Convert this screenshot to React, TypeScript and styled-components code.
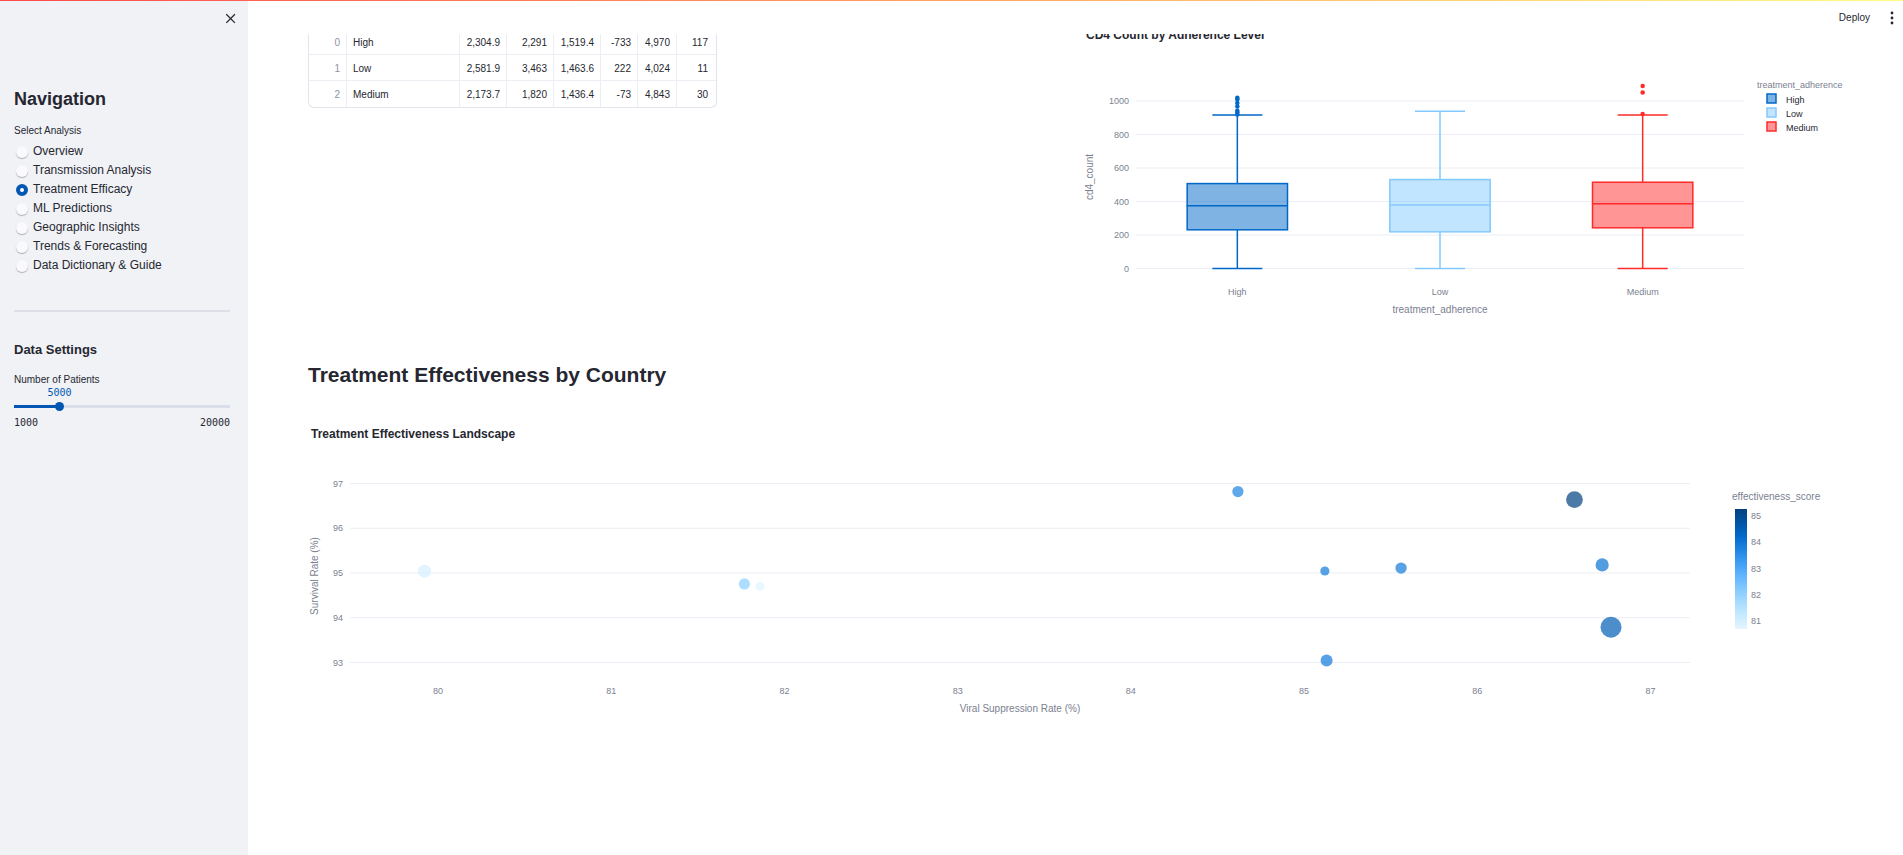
import React, { useLayoutEffect, useRef, useState } from "react";
import styled, { createGlobalStyle } from "styled-components";

const colors = {
  text: "#262730",
  heading: "#262730",
  muted: "#7b7f91",
  grid: "#ebeef4",
  border: "#e2e5ec",
  primary: "#0056b3",
  sidebar: "#f0f2f6",
};

const sans = `"Liberation Sans", Arial, Helvetica, sans-serif`;
const mono = `"DejaVu Sans Mono", "Liberation Mono", monospace`;

const GlobalStyle = createGlobalStyle`
  *, *::before, *::after { box-sizing: border-box; }
  body {
    margin: 0;
    background: #fff;
    color: ${colors.text};
    font-family: ${sans};
    font-size: 12px;
  }
`;

/* ---------- shell ---------- */

const Shell = styled.div`
  display: flex;
  min-height: 100vh;
`;

const Decoration = styled.div`
  position: fixed;
  inset: 0 0 auto;
  height: 1px;
  z-index: 10;
  background: linear-gradient(90deg, #ff4b4b, #fffd80);
`;

const Main = styled.main`
  flex: 1;
  min-width: 0;
`;

const Header = styled.header`
  position: sticky;
  top: 0;
  z-index: 5;
  display: flex;
  justify-content: flex-end;
  align-items: center;
  gap: 17px;
  height: 34px;
  padding: 1px 6px 0 0;
  background: #fff;
`;

const HeaderButton = styled.button`
  display: flex;
  align-items: center;
  padding: 0;
  border: 0;
  background: none;
  color: ${colors.text};
  font: 10px/15px ${sans};
  cursor: pointer;
`;

const Content = styled.div`
  margin-top: -6px;
  padding: 0 61px 60px 60px;
`;

/* ---------- sidebar ---------- */

const Sidebar = styled.aside`
  display: flex;
  flex-direction: column;
  flex: 0 0 248px;
  padding: 12px 18px 24px 14px;
  background: ${colors.sidebar};
`;

const CloseButton = styled.button`
  align-self: flex-end;
  display: flex;
  width: 13px;
  height: 13px;
  margin-right: -7px;
  padding: 0;
  border: 0;
  background: none;
  color: ${colors.text};
  cursor: pointer;
`;

const SidebarTitle = styled.h2`
  margin: 63px 0 13px;
  color: ${colors.heading};
  font-size: 18px;
  line-height: 22px;
`;

const SidebarSubtitle = styled.h3`
  margin: 0 0 14px;
  color: ${colors.heading};
  font-size: 13px;
  line-height: 16px;
`;

const Fieldset = styled.fieldset`
  display: flex;
  flex-direction: column;
  min-width: 0;
  margin: 0;
  padding: 0;
  border: 0;
`;

const Legend = styled.legend`
  margin-bottom: 4px;
  padding: 0;
  font-size: 10px;
  line-height: 15px;
`;

const FieldLabel = styled.label`
  font-size: 10px;
  line-height: 15px;
`;

const Option = styled.label`
  display: flex;
  align-items: center;
  gap: 5px;
  height: 19px;
  padding-left: 2px;
  font-size: 12px;
  line-height: 19px;
  cursor: pointer;
`;

const Radio = styled.input`
  appearance: none;
  flex: none;
  width: 12px;
  height: 12px;
  margin: 0;
  border-radius: 50%;
  background: #fafafc;
  box-shadow: 0 1px 1px rgba(49, 51, 63, 0.35);

  &:checked {
    border: 4px solid ${colors.primary};
    background: #fff;
    box-shadow: none;
  }
`;

const Divider = styled.hr`
  width: 100%;
  height: 2px;
  margin: 35px 0 30px;
  border: 0;
  background: #dcdfe5;
`;

const SliderValue = styled.output`
  align-self: flex-start;
  color: ${colors.primary};
  font: 10px/12px ${mono};
  transform: translateX(-50%);
`;

const SliderTrack = styled.div`
  display: flex;
  align-items: center;
  height: 9px;
  margin: 3px 0 6px;
  background-repeat: no-repeat;
  background-position: 0 3px;
  background-size: 100% 3px;
`;

const SliderInput = styled.input`
  appearance: none;
  flex: 1;
  height: 9px;
  margin: 0 -5px;
  background: none;

  &::-webkit-slider-thumb {
    appearance: none;
    width: 9px;
    height: 9px;
    border-radius: 50%;
    background: ${colors.primary};
  }
`;

const SliderLimits = styled.div`
  display: flex;
  justify-content: space-between;
  font: 10px/12px ${mono};
`;

/* ---------- main content ---------- */

const Columns = styled.div`
  display: grid;
  grid-template-columns: minmax(0, 1fr) minmax(0, 1fr);
  align-items: start;
  gap: 14px;
`;

const SectionTitle = styled.h2`
  margin: 34px 0 40px;
  color: ${colors.heading};
  font-size: 21px;
  line-height: 25px;
`;

const TableFrame = styled.div`
  width: fit-content;
  margin-top: 1px;
  overflow: hidden;
  border: 1px solid ${colors.border};
  border-top: 0;
  border-radius: 0 0 6px 6px;
`;

const DataTable = styled.table`
  border-collapse: separate;
  border-spacing: 0;
  table-layout: fixed;
  width: 407px;
  font-size: 10px;
  line-height: 12px;
`;

const Cell = styled.td<{ $align?: "left" | "right" }>`
  height: 26px;
  padding: 2px 6px 0;
  border-right: 1px solid #eceef3;
  border-bottom: 1px solid #eceef3;
  text-align: ${(p) => p.$align ?? "right"};

  &:last-child {
    padding-right: 8px;
    border-right: 0;
  }

  tr:last-child > & {
    border-bottom: 0;
  }
`;

const IndexCell = styled(Cell).attrs({ as: "th", scope: "row" })`
  color: #8f929d;
  font-weight: 400;
`;

const ChartFrame = styled.div`
  height: 300px;

  svg {
    display: block;
    width: 100%;
    height: 300px;
    overflow: visible;
    font-family: ${sans};
  }
`;

const ChartTitle = styled.text`
  fill: ${colors.heading};
  font-size: 12px;
  font-weight: 700;
`;

const Tick = styled.text<{ $dark?: boolean }>`
  fill: ${(p) => (p.$dark ? colors.text : colors.muted)};
  font-size: 9px;
`;

const AxisTitle = styled.text`
  fill: ${colors.muted};
  font-size: 10px;
`;

const GridLine = styled.line`
  stroke: ${colors.grid};
  stroke-width: 1px;
`;

/* ---------- data ---------- */

const pages = [
  "Overview",
  "Transmission Analysis",
  "Treatment Efficacy",
  "ML Predictions",
  "Geographic Insights",
  "Trends & Forecasting",
  "Data Dictionary & Guide",
];

const columnWidths = [38, 113, 47, 47, 47, 37, 39, 39];

const tableRows = [
  ["High", "2,304.9", "2,291", "1,519.4", "-733", "4,970", "117"],
  ["Low", "2,581.9", "3,463", "1,463.6", "222", "4,024", "11"],
  ["Medium", "2,173.7", "1,820", "1,436.4", "-73", "4,843", "30"],
];

const boxes = [
  { name: "High", color: "#0068c9", low: 0, q1: 231, median: 374, q3: 507, high: 916, outliers: [1020, 1010, 988, 967, 942, 932, 920] },
  { name: "Low", color: "#83c9ff", low: 0, q1: 219, median: 379, q3: 531, high: 939, outliers: [] },
  { name: "Medium", color: "#ff2b2b", low: 0, q1: 243, median: 386, q3: 515, high: 917, outliers: [1089, 1051, 923] },
];

const countries = [
  { x: 79.922, y: 95.04, r: 6.5, color: "#d6f0ff" },
  { x: 81.769, y: 94.755, r: 5.6, color: "#8aceff" },
  { x: 81.859, y: 94.7, r: 4.5, color: "#e0f4ff" },
  { x: 84.618, y: 96.82, r: 5.6, color: "#1c83e1" },
  { x: 86.561, y: 96.64, r: 8.4, color: "#004280" },
  { x: 85.12, y: 95.045, r: 4.6, color: "#1279da" },
  { x: 85.56, y: 95.11, r: 5.7, color: "#1279da" },
  { x: 86.721, y: 95.18, r: 6.6, color: "#0b72d3" },
  { x: 86.772, y: 93.79, r: 10.5, color: "#005eb6" },
  { x: 85.13, y: 93.045, r: 6, color: "#1279da" },
];

const scoreScale = ["#004280", "#0054a3", "#0068c9", "#1c83e1", "#3d9df3", "#60b4ff", "#83c9ff", "#a6dcff", "#c7ebff", "#e4f5ff"];

/* ---------- charts ---------- */

function Chart({ label, children }: { label: string; children: (width: number) => React.ReactNode }) {
  const ref = useRef<HTMLDivElement>(null);
  const [width, setWidth] = useState(0);

  useLayoutEffect(() => {
    const node = ref.current!;
    const measure = () => setWidth(Math.round(node.getBoundingClientRect().width));
    measure();
    const observer = new ResizeObserver(measure);
    observer.observe(node);
    return () => observer.disconnect();
  }, []);

  return (
    <ChartFrame ref={ref}>
      <svg role="img" aria-label={label}>{width > 0 && children(width)}</svg>
    </ChartFrame>
  );
}

function AdherenceChart() {
  return (
    <Chart label="CD4 Count by Adherence Level">
      {(width) => {
        const left = 54;
        const right = width - 98;
        const band = (right - left) / boxes.length;
        const y = (v: number) => 240.5 - (v / 200) * 33.5;
        return (
          <>
            <ChartTitle x={4} y={11}>CD4 Count by Adherence Level</ChartTitle>
            {[0, 200, 400, 600, 800, 1000].map((v) => (
              <g key={v}>
                <GridLine x1={left} x2={right} y1={y(v)} y2={y(v)} />
                <Tick x={left - 7} y={y(v) + 3} textAnchor="end">{v}</Tick>
              </g>
            ))}
            {boxes.map((b, i) => {
              const cx = left + band * (i + 0.5);
              const half = band / 4;
              return (
                <g key={b.name}>
                  <g stroke={b.color} strokeWidth={1.5} fill="none">
                    <path d={`M${cx} ${y(b.low)}V${y(b.q1)}M${cx} ${y(b.q3)}V${y(b.high)}M${cx - 25} ${y(b.low)}h50M${cx - 25} ${y(b.high)}h50`} />
                    <rect x={cx - half + 0.5} y={y(b.q3)} width={half * 2 - 1} height={y(b.q1) - y(b.q3)} fill={b.color} fillOpacity={0.5} />
                    <path d={`M${cx - half} ${y(b.median)}h${half * 2}`} />
                  </g>
                  {b.outliers.map((v) => <circle key={v} cx={cx} cy={y(v)} r={2.25} fill={b.color} />)}
                  <Tick x={cx} y={267} textAnchor="middle">{b.name}</Tick>
                </g>
              );
            })}
            <AxisTitle x={(left + right) / 2} y={285} textAnchor="middle">treatment_adherence</AxisTitle>
            <AxisTitle transform="translate(11 149) rotate(-90)" textAnchor="middle">cd4_count</AxisTitle>
            <Tick x={width - 85} y={60}>treatment_adherence</Tick>
            {boxes.map((b, i) => (
              <g key={b.name}>
                <rect x={width - 75} y={66 + i * 14} width={9} height={9} fill={b.color} fillOpacity={0.5} stroke={b.color} strokeWidth={1.5} />
                <Tick $dark x={width - 56} y={75 + i * 14}>{b.name}</Tick>
              </g>
            ))}
          </>
        );
      }}
    </Chart>
  );
}

function LandscapeChart() {
  return (
    <Chart label="Treatment Effectiveness Landscape">
      {(width) => {
        const left = 42;
        const right = width - 152;
        const x = (v: number) => left + ((v - 79.492) / (87.228 - 79.492)) * (right - left);
        const y = (v: number) => 56.5 + (97 - v) * 44.75;
        return (
          <>
            <ChartTitle x={3} y={11}>Treatment Effectiveness Landscape</ChartTitle>
            {[93, 94, 95, 96, 97].map((v) => (
              <g key={v}>
                <GridLine x1={left} x2={right} y1={y(v)} y2={y(v)} />
                <Tick x={left - 7} y={y(v) + 3} textAnchor="end">{v}</Tick>
              </g>
            ))}
            {[80, 81, 82, 83, 84, 85, 86, 87].map((v) => (
              <Tick key={v} x={x(v)} y={267} textAnchor="middle">{v}</Tick>
            ))}
            {countries.map((c) => (
              <circle key={c.x} cx={x(c.x)} cy={y(c.y)} r={c.r} fill={c.color} opacity={0.7} />
            ))}
            <AxisTitle x={(left + right) / 2} y={285} textAnchor="middle">Viral Suppression Rate (%)</AxisTitle>
            <AxisTitle transform="translate(10 149) rotate(-90)" textAnchor="middle">Survival Rate (%)</AxisTitle>
            <defs>
              <linearGradient id="score" x1="0" y1="0" x2="0" y2="1">
                {scoreScale.map((c, i) => <stop key={c} offset={i / (scoreScale.length - 1)} stopColor={c} />)}
              </linearGradient>
            </defs>
            <AxisTitle x={width - 110} y={73}>effectiveness_score</AxisTitle>
            <rect x={width - 107} y={82} width={12} height={120} fill="url(#score)" />
            {[85, 84, 83, 82, 81].map((v, i) => (
              <Tick key={v} x={width - 91} y={92 + i * 26.3}>{v}</Tick>
            ))}
          </>
        );
      }}
    </Chart>
  );
}

/* ---------- page ---------- */

function PatientSlider() {
  const min = 1000;
  const max = 20000;
  const [value, setValue] = useState(5000);
  const percent = ((value - min) / (max - min)) * 100;
  return (
    <>
      <FieldLabel htmlFor="patients">Number of Patients</FieldLabel>
      <SliderValue htmlFor="patients" style={{ marginLeft: `${percent}%` }}>{value}</SliderValue>
      <SliderTrack
        style={{ backgroundImage: `linear-gradient(90deg, ${colors.primary} ${percent}%, #d9dfe8 ${percent}%)` }}
      >
        <SliderInput
          id="patients"
          type="range"
          min={min}
          max={max}
          step={100}
          value={value}
          onChange={(e) => setValue(Number(e.target.value))}
        />
      </SliderTrack>
      <SliderLimits>
        <span>{min}</span>
        <span>{max}</span>
      </SliderLimits>
    </>
  );
}

export default function App() {
  const [page, setPage] = useState("Treatment Efficacy");
  return (
    <>
      <GlobalStyle />
      <Decoration />
      <Shell>
        <Sidebar>
          <CloseButton aria-label="Close sidebar">
            <svg width="13" height="13" viewBox="0 0 13 13" stroke="currentColor" strokeWidth="1.3" aria-hidden="true">
              <path d="M2.3 2.3l8.6 8.6M10.9 2.3l-8.6 8.6" />
            </svg>
          </CloseButton>
          <SidebarTitle>Navigation</SidebarTitle>
          <Fieldset>
            <Legend>Select Analysis</Legend>
            {pages.map((name) => (
              <Option key={name}>
                <Radio type="radio" name="page" checked={page === name} onChange={() => setPage(name)} />
                {name}
              </Option>
            ))}
          </Fieldset>
          <Divider />
          <SidebarSubtitle>Data Settings</SidebarSubtitle>
          <PatientSlider />
        </Sidebar>
        <Main>
          <Header>
            <HeaderButton>Deploy</HeaderButton>
            <HeaderButton aria-label="Main menu">
              <svg width="10" height="14" viewBox="0 0 10 14" fill="currentColor" aria-hidden="true">
                <circle cx="5" cy="2" r="1.4" />
                <circle cx="5" cy="7" r="1.4" />
                <circle cx="5" cy="12" r="1.4" />
              </svg>
            </HeaderButton>
          </Header>
          <Content>
            <Columns>
              <TableFrame>
                <DataTable>
                  <colgroup>
                    {columnWidths.map((w, i) => <col key={i} width={w} />)}
                  </colgroup>
                  <tbody>
                    {tableRows.map(([name, ...values], i) => (
                      <tr key={name}>
                        <IndexCell>{i}</IndexCell>
                        <Cell $align="left">{name}</Cell>
                        {values.map((v, j) => <Cell key={j}>{v}</Cell>)}
                      </tr>
                    ))}
                  </tbody>
                </DataTable>
              </TableFrame>
              <AdherenceChart />
            </Columns>
            <SectionTitle>Treatment Effectiveness by Country</SectionTitle>
            <LandscapeChart />
          </Content>
        </Main>
      </Shell>
    </>
  );
}
